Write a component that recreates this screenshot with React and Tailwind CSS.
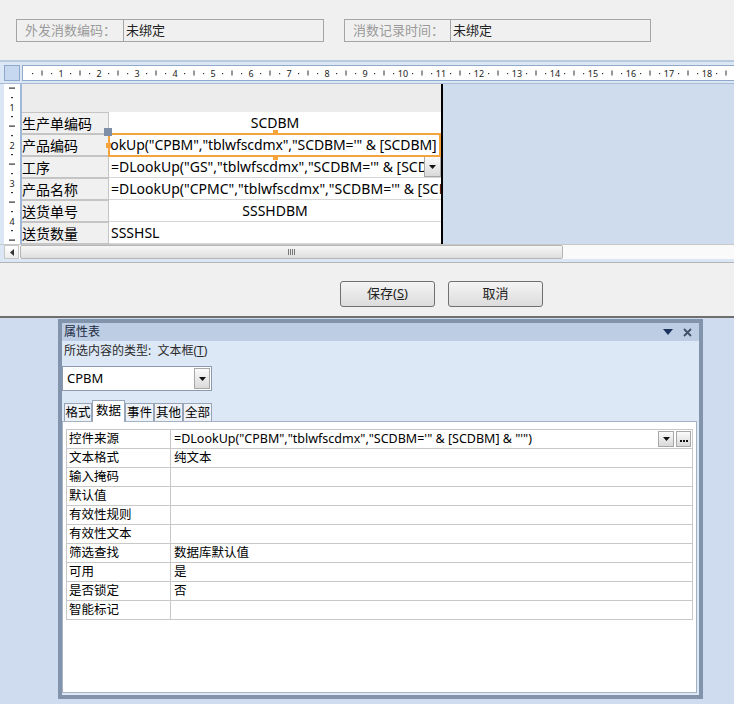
import React from 'react';

const FONT = "font-['Noto_Sans','Noto_Sans_CJK_SC',sans-serif]";

function HRuler() {
  const marks = [];
  for (let n = 0; n <= 18; n++) {
    const x = 38 * n;
    if (n > 0) {
      marks.push(
        <text key={'t' + n} x={x} y={11} fontSize="9" textAnchor="middle" fill="#222" fontFamily="Noto Sans, sans-serif">
          {n}
        </text>
      );
    }
    marks.push(<rect key={'a' + n} x={x + 9} y={7} width={1.2} height={1.2} fill="#333" />);
    marks.push(<rect key={'b' + n} x={x + 18.5} y={4.5} width={1} height={5} fill="#333" />);
    marks.push(<rect key={'c' + n} x={x + 28} y={7} width={1.2} height={1.2} fill="#333" />);
  }
  return (
    <svg width="712" height="15" className="block">
      {marks}
    </svg>
  );
}

function VRuler() {
  const marks = [];
  for (let n = 0; n <= 4; n++) {
    const y = 23 + 38 * (n - 1);
    if (n > 0) {
      marks.push(
        <text key={'t' + n} x={8} y={y + 3.5} fontSize="9" textAnchor="middle" fill="#222" fontFamily="Noto Sans, sans-serif">
          {n}
        </text>
      );
    }
    marks.push(<rect key={'a' + n} x={7} y={y + 9} width={2} height={1.2} fill="#333" />);
    marks.push(<rect key={'b' + n} x={5} y={y + 18.5} width={6} height={1.2} fill="#333" />);
    marks.push(<rect key={'c' + n} x={7} y={y + 28} width={2} height={1.2} fill="#333" />);
  }
  return (
    <svg width="16" height="160" className="block">
      {marks}
    </svg>
  );
}

function DownBtn({ className }) {
  return (
    <div className={'flex items-center justify-center border border-[#a8a8a8] bg-gradient-to-b from-[#fbfbfb] to-[#d9d9d9] ' + className}>
      <svg width="7" height="4" viewBox="0 0 7 4">
        <path d="M0 0h7L3.5 4z" fill="#111" />
      </svg>
    </div>
  );
}

const formRows = [
  { label: '生产单编码', value: 'SCDBM', center: true },
  { label: '产品编码', value: 'ookUp("CPBM","tblwfscdmx","SCDBM=\'" & [SCDBM] & "\'")', selected: true },
  { label: '工序', value: '=DLookUp("GS","tblwfscdmx","SCDBM=\'" & [SCDBM] & "\'")', combo: true },
  { label: '产品名称', value: '=DLookUp("CPMC","tblwfscdmx","SCDBM=\'" & [SCDBM] & "\'")' },
  { label: '送货单号', value: 'SSSHDBM', center: true },
  { label: '送货数量', value: 'SSSHSL' },
];

const props = [
  ['控件来源', '=DLookUp("CPBM","tblwfscdmx","SCDBM=\'" & [SCDBM] & "\'")'],
  ['文本格式', '纯文本'],
  ['输入掩码', ''],
  ['默认值', ''],
  ['有效性规则', ''],
  ['有效性文本', ''],
  ['筛选查找', '数据库默认值'],
  ['可用', '是'],
  ['是否锁定', '否'],
  ['智能标记', ''],
];

const tabs = [
  { name: '格式', w: 'w-[28px]' },
  { name: '数据', w: 'w-[33px]', active: true },
  { name: '事件', w: 'w-[29px]' },
  { name: '其他', w: 'w-[29px]' },
  { name: '全部', w: 'w-[29px]' },
];

export default function App() {
  return (
    <div className={'w-[734px] h-[704px] overflow-hidden bg-[#cfdbee] ' + FONT}>
      {/* top bound fields */}
      <div className="h-[60px] bg-[#f0f0f0] flex gap-[20px] pl-[16px] pt-[19px]">
        <div className="w-[308px] h-[23px] flex border border-[#a5a5a5] text-[13px]">
          <div className="w-[107px] border-r border-[#a5a5a5] pl-[8px] leading-[21px] text-[#9a9a9a]">外发消数编码：</div>
          <div className="pl-[2px] leading-[21px] text-[#222]">未绑定</div>
        </div>
        <div className="w-[307px] h-[23px] flex border border-[#a5a5a5] text-[13px]">
          <div className="w-[106px] border-r border-[#a5a5a5] pl-[8px] leading-[21px] text-[#9a9a9a]">消数记录时间：</div>
          <div className="pl-[2px] leading-[21px] text-[#222]">未绑定</div>
        </div>
      </div>

      {/* design view */}
      <div className="h-[202px] bg-[#dce7f5] border-t-2 border-[#b9c9de]">
        <div className="h-[22px] flex items-center pl-[4px] gap-[2px] border-b border-[#a9bcd7]">
          <div className="w-[16px] h-[16px] bg-[#c6d8f0] border border-[#8fa9cc]" />
          <div className="flex-1 h-[16px] bg-white border-y border-l border-[#8fa9cc] overflow-hidden">
            <HRuler />
          </div>
        </div>
        <div className="h-[160px] flex">
          <div className="w-[4px]" />
          <div className="w-[16px] bg-white">
            <VRuler />
          </div>
          <div className="w-[2px] bg-[#9fb8da]" />
          <div className="w-[421px] bg-[#ececec] border-r-2 border-black relative">
            <div className="h-[28px]" />
            {formRows.map((r) => (
              <div key={r.label} className="h-[22px] flex text-[14px] text-black leading-[21px]">
                <div className="w-[87px] shrink-0 bg-[#f0f0f0] border border-t-0 border-[#c4c4c4] border-l-0 first:border-t whitespace-nowrap overflow-hidden">
                  {r.label}
                </div>
                <div
                  className={
                    'flex-1 bg-white border-b border-[#d6d6d6] whitespace-nowrap overflow-hidden relative ' +
                    (r.center ? 'text-center' : 'pl-[2px]')
                  }
                >
                  {r.selected ? <span className="ml-[-9px] tracking-[-0.1px]">{r.value}</span> : r.value}
                  {r.combo && <DownBtn className="absolute right-0 top-0 w-[17px] h-[21px]" />}
                </div>
              </div>
            ))}
            {/* selection frame on 产品编码 */}
            <div className="absolute left-[86px] top-[49px] w-[333px] h-[24px] border-2 border-[#f5a33a]" />
            <div className="absolute left-[82px] top-[44px] w-[8px] h-[8px] bg-[#7d8ea6]" />
            <div className="absolute left-[251px] top-[46px] w-[5px] h-[5px] bg-[#f5a33a]" />
            <div className="absolute left-[251px] top-[71px] w-[5px] h-[5px] bg-[#f5a33a]" />
            <div className="absolute left-[84px] top-[59px] w-[5px] h-[5px] bg-[#f5a33a]" />
          </div>
          <div className="flex-1 bg-[#cfdcee]" />
        </div>
        <div className="h-[15px] flex bg-[#fafafa] border-t border-[#c8c8c8]">
          <div className="w-[4px] bg-[#dce7f5]" />
          <div className="w-[15px] flex items-center justify-center border border-[#c8c8c8] bg-gradient-to-b from-white to-[#ececec]">
            <svg width="4" height="7" viewBox="0 0 4 7">
              <path d="M4 0v7L0 3.5z" fill="#333" />
            </svg>
          </div>
          <div className="w-[543px] ml-[1px] border border-[#b5b5b5] rounded-[2px] bg-gradient-to-b from-[#f7f7f7] to-[#dedede] flex items-center justify-center">
            <div className="flex gap-[1px]">
              <div className="w-[1px] h-[6px] bg-[#777]" />
              <div className="w-[1px] h-[6px] bg-[#777]" />
              <div className="w-[1px] h-[6px] bg-[#777]" />
              <div className="w-[1px] h-[6px] bg-[#777]" />
            </div>
          </div>
          <div className="flex-1" />
        </div>
      </div>

      {/* buttons */}
      <div className="h-[56px] bg-[#f0f0f0] border-t border-[#b4b4b4] border-b-2 border-b-[#6f6f6f] flex pl-[340px] pt-[18px] gap-[13px]">
        <button className="w-[95px] h-[26px] rounded-[3px] border border-[#707070] bg-gradient-to-b from-[#f4f4f4] to-[#dcdcdc] text-[13px] text-[#222]">
          保存(<span className="underline">S</span>)
        </button>
        <button className="w-[95px] h-[26px] rounded-[3px] border border-[#707070] bg-gradient-to-b from-[#f4f4f4] to-[#dcdcdc] text-[13px] text-[#222]">
          取消
        </button>
      </div>

      {/* property sheet */}
      <div className="ml-[58px] mt-[1px] w-[645px] h-[380px] border-4 border-[#8294ac] bg-[#dde8f6] flex flex-col">
        <div className="h-[18px] bg-[#bccde4] flex items-center pl-[2px] text-[12px] text-[#1b2a40]">
          <span className="flex-1">属性表</span>
          <svg width="10" height="6" viewBox="0 0 10 6" className="mr-[10px]">
            <path d="M0 0h10L5 6z" fill="#1d355e" />
          </svg>
          <svg width="9" height="9" viewBox="0 0 9 9" className="mr-[7px]">
            <path d="M1 1l7 7M8 1L1 8" stroke="#3f4f66" strokeWidth="1.8" />
          </svg>
        </div>
        <div className="h-[20px] pl-[2px] text-[12px] leading-[20px] text-[#2a2a2a]">
          所选内容的类型:&nbsp;&nbsp;文本框(<span className="underline">T</span>)
        </div>
        <div className="mt-[5px] w-[150px] h-[25px] bg-white border border-[#8a9ab0] flex items-center pl-[4px] pr-[1px]">
          <span className="flex-1 text-[13px] text-black">CPBM</span>
          <DownBtn className="w-[16px] h-[21px]" />
        </div>
        <div className="mt-[8px] h-[22px] flex items-end pl-[2px]">
          {tabs.map((t) => (
            <div
              key={t.name}
              className={
                t.w +
                ' text-[12.5px] text-black text-center border border-b-0 border-[#98a5b8] ' +
                (t.active ? 'h-[22px] bg-white leading-[20px] relative top-[1px] z-10' : 'h-[18px] bg-[#eef2f7] leading-[17px]')
              }
            >
              {t.name}
            </div>
          ))}
        </div>
        <div className="w-[635px] h-[272px] bg-white border border-[#a5b2c4] pt-[7px] px-[3px]">
          <div className="border-t border-l border-[#c8c8c8]">
            {props.map(([k, v], i) => (
              <div key={k} className="h-[19px] flex text-[12.5px] text-black leading-[18px] border-b border-[#c8c8c8]">
                <div className="w-[104px] pl-[2px] border-r border-[#c8c8c8]">{k}</div>
                <div className="flex-1 pl-[3px] border-r border-[#c8c8c8] flex items-center whitespace-nowrap overflow-hidden">
                  <span className="flex-1">{v}</span>
                  {i === 0 && (
                    <>
                      <DownBtn className="w-[16px] h-[16px]" />
                      <div className="ml-[2px] mr-[1px] w-[15px] h-[16px] border border-[#a8a8a8] bg-gradient-to-b from-[#fbfbfb] to-[#d9d9d9] flex items-end justify-center pb-[4px] gap-[1px]">
                        <div className="w-[2px] h-[2px] bg-[#111]" />
                        <div className="w-[2px] h-[2px] bg-[#111]" />
                        <div className="w-[2px] h-[2px] bg-[#111]" />
                      </div>
                    </>
                  )}
                </div>
              </div>
            ))}
          </div>
        </div>
      </div>
    </div>
  );
}
